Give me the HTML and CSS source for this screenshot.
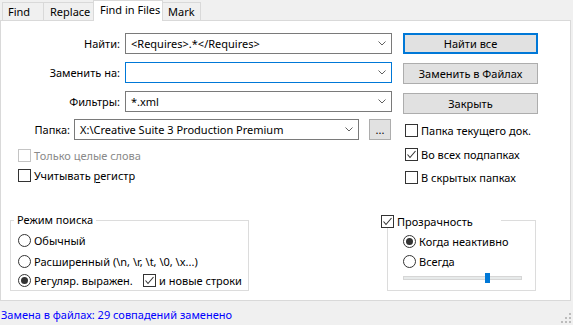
FILE: index.html
```html
<!DOCTYPE html>
<html lang="ru">
<head>
    <meta charset="UTF-8">
    <meta name="viewport" content="width=device-width, initial-scale=1.0">
    <title>Find in Files</title>
    <link rel="stylesheet" href="styles.css">
</head>
<body>
    <div class="tabs">
        <span class="tab tab-find">Find</span>
        <span class="tab tab-replace">Replace</span>
        <span class="tab tab-files active">Find in Files</span>
        <span class="tab tab-mark">Mark</span>
    </div>
    <div class="panel">
        <div class="top">
            <div class="fields">
                <div class="row">
                    <span class="label">Найти:</span>
                    <div class="combo"><span>&lt;Requires&gt;.*&lt;/Requires&gt;</span><svg class="arrow" width="8" height="5"><polyline points="0.5,0.5 4,4 7.5,0.5"/></svg></div>
                </div>
                <div class="row">
                    <span class="label">Заменить на:</span>
                    <div class="combo focus"><svg class="arrow" width="8" height="5"><polyline points="0.5,0.5 4,4 7.5,0.5"/></svg></div>
                </div>
                <div class="row row-filter">
                    <span class="label">Фильтры:</span>
                    <div class="combo"><span>*.xml</span><svg class="arrow" width="8" height="5"><polyline points="0.5,0.5 4,4 7.5,0.5"/></svg></div>
                </div>
                <div class="row row-folder">
                    <span class="label">Папка:</span>
                    <div class="combo"><span>X:\Creative Suite 3 Production Premium</span><svg class="arrow" width="8" height="5"><polyline points="0.5,0.5 4,4 7.5,0.5"/></svg></div>
                    <span class="browse">...</span>
                </div>
                <div class="options">
                    <div class="check disabled"><span class="box"></span><span>Только целые слова</span></div>
                    <div class="check"><span class="box"></span><span>Учитывать <u>р</u>егистр</span></div>
                </div>
            </div>
            <div class="actions">
                <div class="btn default">Найти все</div>
                <div class="btn">Заменить в Файлах</div>
                <div class="btn">Закрыть</div>
                <div class="checks">
                    <div class="check"><span class="box"></span><span>Папка текущего док.</span></div>
                    <div class="check"><span class="box"><svg width="11" height="11"><polyline points="1.5,5.5 4,8.5 9.5,2"/></svg></span><span>Во всех подпапках</span></div>
                    <div class="check"><span class="box"></span><span>В скрытых папках</span></div>
                </div>
            </div>
        </div>
        <div class="bottom">
            <div class="group mode">
                <span class="legend">Режим поиска</span>
                <div class="radio-item"><span class="radio"></span><span>Обычный</span></div>
                <div class="radio-item"><span class="radio"></span><span>Расширенный (\n, \r, \t, \0, \x...)</span></div>
                <div class="radio-line">
                    <div class="radio-item regex"><span class="radio on"></span><span>Регуляр. выражен.</span></div>
                    <div class="check"><span class="box"><svg width="11" height="11"><polyline points="1.5,5.5 4,8.5 9.5,2"/></svg></span><span>и новые строки</span></div>
                </div>
            </div>
            <div class="group transparency">
                <div class="legend check"><span class="box"><svg width="11" height="11"><polyline points="1.5,5.5 4,8.5 9.5,2"/></svg></span><span>Прозрачность</span></div>
                <div class="radio-item"><span class="radio on"></span><span>Когда неактивно</span></div>
                <div class="radio-item"><span class="radio"></span><span>Всегда</span></div>
                <div class="slider"><span class="thumb"></span></div>
            </div>
        </div>
    </div>
    <div class="status">
        <span>Замена в файлах: 29 совпадений заменено</span>
        <svg class="grip" width="12" height="12">
            <rect x="9" y="1" width="2" height="2"/>
            <rect x="5" y="5" width="2" height="2"/>
            <rect x="9" y="5" width="2" height="2"/>
            <rect x="1" y="9" width="2" height="2"/>
            <rect x="5" y="9" width="2" height="2"/>
            <rect x="9" y="9" width="2" height="2"/>
        </svg>
    </div>
</body>
</html>
```

FILE: styles.css
```css
body{
    margin: 0;
    width: 573px;
    height: 325px;
    overflow: hidden;
    background-color: #f0f0f0;
    font-family: "Noto Sans", sans-serif;
    font-size: 11px;
    color: #000;
}

/* tabs */
.tabs{
    display: flex;
    align-items: flex-end;
    height: 20px;
    padding-left: 2px;
    position: relative;
    z-index: 1;
}
.tab{
    box-sizing: border-box;
    height: 18px;
    line-height: 18px;
    padding-left: 5px;
    border: 1px solid #d9d9d9;
    border-bottom: none;
    background-color: #f0f0f0;
    white-space: nowrap;
}
.tab + .tab{
    margin-left: -1px;
}
.tab-find{ width: 42px; }
.tab-replace{ width: 51px; padding-left: 6px; }
.tab-files{ width: 70px; padding-left: 6px; }
.tab-mark{ width: 39px; }
.tab.active{
    height: 21px;
    line-height: 18px;
    margin-bottom: -1px;
    background-color: #fff;
    position: relative;
}

/* panel */
.panel{
    box-sizing: border-box;
    width: 571px;
    height: 281px;
    padding-top: 12px;
    background-color: #fff;
    border: 1px solid #d9d9d9;
}
.top{
    display: flex;
}
.fields{
    width: 391px;
}
.row{
    display: flex;
    align-items: center;
    height: 21px;
    margin-bottom: 8px;
}
.row-filter{
    margin-bottom: 7px;
}
.row-folder{
    margin-bottom: 0;
}
.label{
    width: 119px;
    text-align: right;
    white-space: nowrap;
}
.combo{
    box-sizing: border-box;
    display: flex;
    align-items: center;
    justify-content: space-between;
    width: 267px;
    height: 21px;
    margin-left: 5px;
    padding: 0 5px 0 5px;
    border: 1px solid #7a7a7a;
    white-space: nowrap;
}
.combo.focus{
    border-color: #0078d7;
    justify-content: flex-end;
}
.arrow{
    flex-shrink: 0;
}
.arrow polyline{
    fill: none;
    stroke: #606060;
    stroke-width: 1;
}
.row-folder .label{
    width: 69px;
}
.row-folder .combo{
    width: 285px;
    margin-left: 4px;
}
.browse{
    box-sizing: border-box;
    width: 22px;
    height: 21px;
    margin-left: 10px;
    border: 1px solid #adadad;
    background-color: #e1e1e1;
    text-align: center;
    line-height: 20px;
}
.options{
    padding-left: 17px;
    margin-top: 9px;
}
.options .check + .check{
    margin-top: 7px;
}

/* checkbox and radio */
.check, .radio-item{
    display: flex;
    align-items: center;
    height: 13px;
    white-space: nowrap;
}
.box, .radio{
    box-sizing: border-box;
    flex-shrink: 0;
    width: 13px;
    height: 13px;
    margin-right: 3px;
    border: 1px solid #333;
    background-color: #fff;
}
.box svg{
    display: block;
}
.box polyline{
    fill: none;
    stroke: #333;
    stroke-width: 1.1;
}
.check.disabled{
    color: #8a8a8a;
}
.check.disabled .box{
    border-color: #c4c4c4;
}
u{
    text-decoration-thickness: 1px;
    text-underline-offset: 2px;
}
.radio{
    border-radius: 50%;
}
.radio.on::after{
    content: '';
    display: block;
    width: 7px;
    height: 7px;
    margin: 2px;
    border-radius: 50%;
    background-color: #333;
}

/* buttons column */
.actions{
    width: 135px;
    margin-left: 11px;
}
.btn{
    box-sizing: border-box;
    height: 21px;
    line-height: 19px;
    margin-bottom: 9px;
    border: 1px solid #adadad;
    background-color: #e1e1e1;
    text-align: center;
    white-space: nowrap;
}
.btn.default{
    border: 2px solid #0078d7;
    line-height: 17px;
}
.btn + .btn + .btn{
    margin-bottom: 0;
}
.checks{
    padding-left: 2px;
    margin-top: 10px;
}
.checks .check + .check{
    margin-top: 11px;
}
.checks .check + .check + .check{
    margin-top: 10px;
}

/* groups */
.bottom{
    display: flex;
    margin-top: 36px;
    padding-left: 9px;
}
.group{
    box-sizing: border-box;
    height: 71px;
    border: 1px solid #dcdcdc;
    position: relative;
}
.group .legend{
    position: absolute;
    background-color: #fff;
}
.mode{
    width: 239px;
    padding: 13px 0 0 7px;
}
.mode .legend{
    left: 3px;
    top: -9px;
    padding: 0 3px;
    line-height: 16px;
}
.mode .radio-item + .radio-item{
    margin-top: 8px;
}
.radio-line{
    display: flex;
    margin-top: 6px;
}
.regex{
    width: 125px;
}
.transparency{
    width: 149px;
    margin-left: 138px;
    padding: 14px 0 0 15px;
}
.transparency .legend{
    left: -7px;
    top: -6px;
    width: 120px;
}
.transparency .radio-item + .radio-item{
    margin-top: 7px;
}
.slider{
    box-sizing: border-box;
    width: 119px;
    height: 4px;
    margin-top: 8px;
    border: 1px solid #d6d6d6;
    background-color: #e7eaea;
    position: relative;
}
.thumb{
    position: absolute;
    left: 81px;
    top: -4px;
    width: 5px;
    height: 10px;
    background-color: #0078d7;
}

/* status bar */
.status{
    display: flex;
    justify-content: space-between;
    align-items: flex-end;
    height: 24px;
    padding-left: 1px;
    color: #0000ff;
}
.status span{
    align-self: flex-start;
    line-height: 20px;
    padding-top: 4px;
}
.grip{
    margin-right: 1px;
    margin-bottom: 1px;
}
.grip rect{
    fill: #bcbcbc;
}
```
